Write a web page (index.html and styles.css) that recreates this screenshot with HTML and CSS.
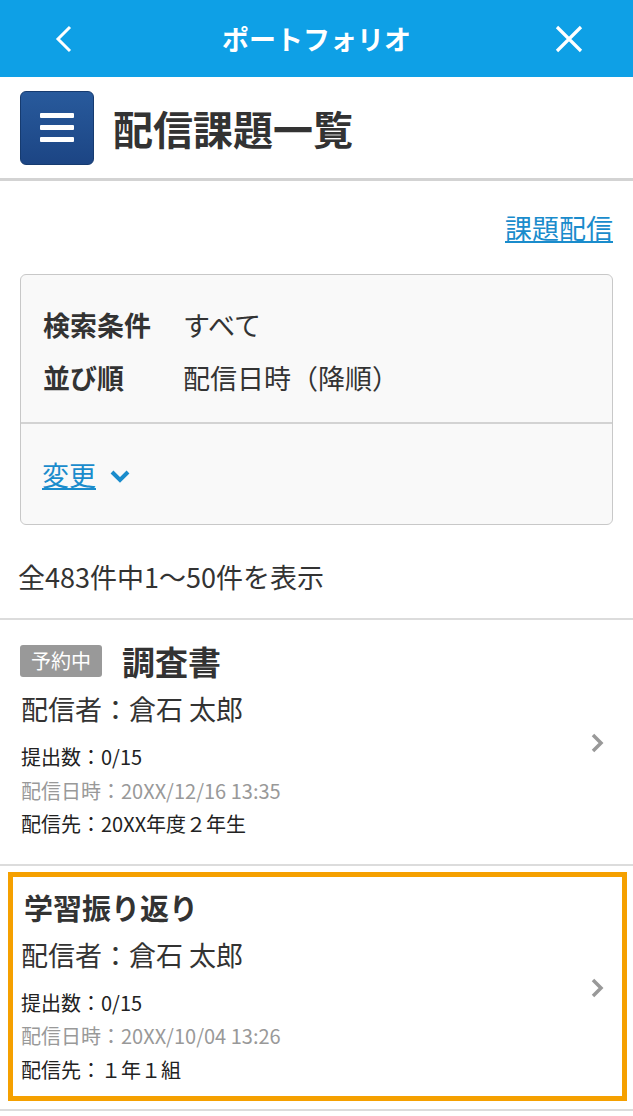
FILE: index.html
```html
<!DOCTYPE html>
<html lang="ja">

<head>
    <meta charset="UTF-8">
    <meta name="viewport" content="width=device-width, initial-scale=1.0">
    <title>配信課題一覧</title>
    <link rel="stylesheet" href="styles.css">
</head>

<body>
    <header class="app-bar">
        <svg class="bar-icon" width="28" height="28" viewBox="0 0 28 28">
            <path d="M20 2 L8 14 L20 26" fill="none" stroke="#fff" stroke-width="3" />
        </svg>
        <h1 class="app-title">ポートフォリオ</h1>
        <svg class="bar-icon" width="28" height="28" viewBox="0 0 28 28">
            <path d="M2 2 L26 26 M26 2 L2 26" fill="none" stroke="#fff" stroke-width="3.2" />
        </svg>
    </header>

    <div class="page-head">
        <button class="menu-btn" type="button">
            <span></span><span></span><span></span>
        </button>
        <h2 class="page-title">配信課題一覧</h2>
    </div>

    <main class="content">
        <div class="actions">
            <a href="#" class="link">課題配信</a>
        </div>

        <section class="search-box">
            <div class="conditions">
                <div class="cond-row">
                    <span class="cond-label">検索条件</span>
                    <span class="cond-value">すべて</span>
                </div>
                <div class="cond-row">
                    <span class="cond-label">並び順</span>
                    <span class="cond-value">配信日時（降順）</span>
                </div>
            </div>
            <div class="search-foot">
                <a href="#" class="link">変更</a>
                <svg class="down-icon" width="22" height="14" viewBox="0 0 22 14">
                    <path d="M3 3 L11 11 L19 3" fill="none" stroke="#1a8ccc" stroke-width="4" />
                </svg>
            </div>
        </section>

        <p class="count">全483件中1〜50件を表示</p>
    </main>

    <ul class="task-list">
        <li class="task">
            <div class="task-body">
                <div class="task-head">
                    <span class="badge">予約中</span>
                    <span class="task-title">調査書</span>
                </div>
                <div class="sender">配信者：倉石 太郎</div>
                <div class="meta">提出数：0/15</div>
                <div class="meta muted">配信日時：20XX/12/16 13:35</div>
                <div class="meta">配信先：20XX年度２年生</div>
            </div>
            <svg class="next-icon" width="14" height="20" viewBox="0 0 14 20">
                <path d="M3 2 L11 10 L3 18" fill="none" stroke="#999" stroke-width="3.5" />
            </svg>
        </li>
        <li class="task highlight">
            <div class="task-body">
                <div class="task-head">
                    <span class="task-title">学習振り返り</span>
                </div>
                <div class="sender">配信者：倉石 太郎</div>
                <div class="meta">提出数：0/15</div>
                <div class="meta muted">配信日時：20XX/10/04 13:26</div>
                <div class="meta">配信先：１年１組</div>
            </div>
            <svg class="next-icon" width="14" height="20" viewBox="0 0 14 20">
                <path d="M3 2 L11 10 L3 18" fill="none" stroke="#999" stroke-width="3.5" />
            </svg>
        </li>
    </ul>
</body>

</html>
```

FILE: styles.css
```css
/* Base */
body {
    margin: 0;
    font-family: "Noto Sans CJK JP", Roboto, sans-serif;
    color: #333;
    background-color: #fff;
    overflow: hidden;
}

/* Top app bar */
.app-bar {
    display: flex;
    justify-content: space-between;
    align-items: center;
    height: 77px;
    padding: 0 50px 0 50px;
    background-color: #0ea0e6;
    box-sizing: border-box;
}

.bar-icon {
    display: block;
}

.app-title {
    margin: 0;
    font-size: 27px;
    font-weight: bold;
    color: #fff;
}

/* Page heading */
.page-head {
    display: flex;
    align-items: center;
    gap: 19px;
    height: 101px;
    padding: 0 20px;
    border-bottom: 3px solid #d3d3d3;
}

.menu-btn {
    display: flex;
    flex-direction: column;
    justify-content: center;
    gap: 7px;
    width: 74px;
    height: 74px;
    padding: 0 19px;
    border: 1px solid #163b70;
    border-radius: 6px;
    background: linear-gradient(#285a9c, #1c4584);
    box-sizing: border-box;
}

.menu-btn span {
    display: block;
    height: 5px;
    background-color: #fff;
    border-radius: 1px;
}

.page-title {
    margin: 0;
    font-size: 40px;
    font-weight: bold;
    color: #333;
}

/* Content */
.content {
    padding: 0 20px;
}

.actions {
    display: flex;
    justify-content: flex-end;
    padding-top: 29px;
    line-height: 36px;
}

.link {
    color: #1a8ccc;
    font-size: 27px;
}

.search-box {
    margin-top: 28px;
    border: 1px solid #c8c8c8;
    border-radius: 6px;
    background-color: #f9f9f9;
}

.conditions {
    padding: 23px 22px 18px;
    border-bottom: 2px solid #d3d3d3;
}

.cond-row {
    display: flex;
    height: 53px;
    align-items: center;
    font-size: 27px;
}

.cond-label {
    width: 140px;
    font-weight: bold;
}

.search-foot {
    display: flex;
    align-items: center;
    gap: 13px;
    height: 100px;
    padding: 0 21px;
}

.down-icon {
    margin-top: 4px;
}

.count {
    margin: 34px 0 0 -2px;
    padding-bottom: 23px;
    font-size: 27px;
    line-height: 36px;
}

/* Task list */
.task-list {
    margin: 0;
    padding: 0;
    list-style: none;
}

.task {
    position: relative;
    display: flex;
    align-items: center;
    justify-content: space-between;
    padding: 25px 29px 23px 21px;
    border-top: 2px solid #dcdcdc;
}

.task:last-child {
    border-bottom: 2px solid #dcdcdc;
}

.task-head {
    display: flex;
    align-items: center;
    gap: 20px;
    height: 32px;
}

.badge {
    padding: 0 11px;
    line-height: 32px;
    font-size: 20px;
    color: #fff;
    background-color: #999;
    border-radius: 3px;
    margin-left: -1px;
}

.task-title {
    font-size: 33px;
    font-weight: bold;
}

.highlight .task-title {
    font-size: 29px;
    margin-left: 3px;
}

.sender {
    margin-top: 14px;
    font-size: 27px;
    line-height: 36px;
}

.meta {
    font-size: 20px;
    line-height: 33.5px;
    color: #222;
}

.sender + .meta {
    margin-top: 13px;
}

.muted {
    color: #999;
}

.next-icon {
    display: block;
}

/* Highlight frame drawn over the second item */
.highlight::after {
    content: "";
    position: absolute;
    top: 6px;
    right: 6px;
    bottom: 8px;
    left: 8px;
    border: 5px solid #f5a000;
    pointer-events: none;
}
```
